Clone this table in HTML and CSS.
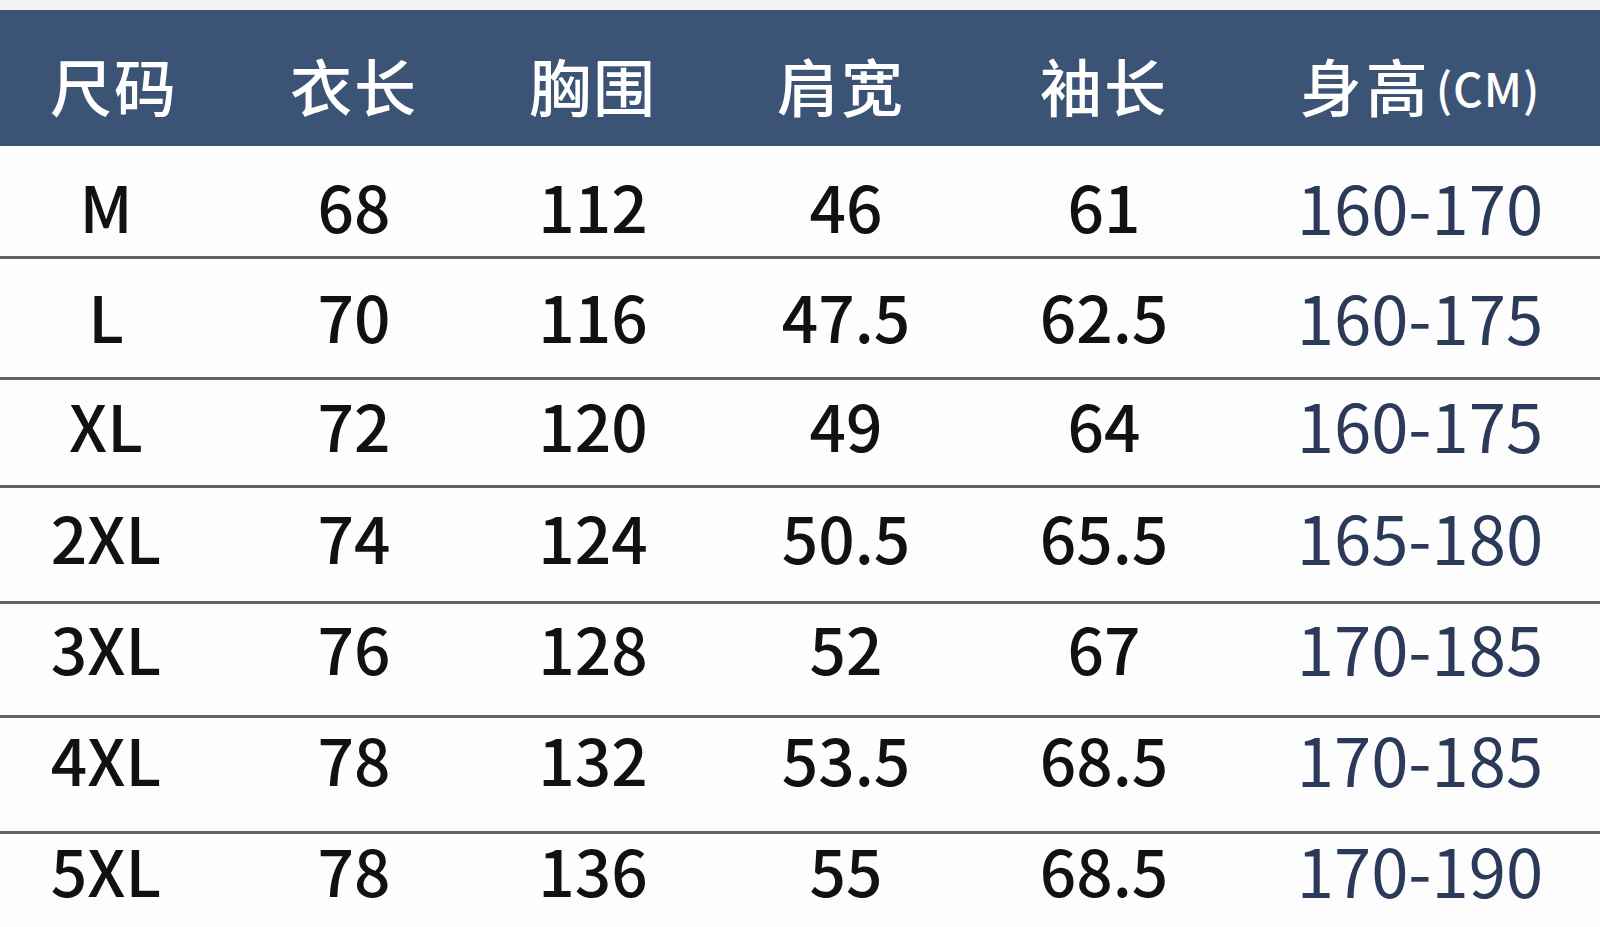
FILE: index.html
```html
<!DOCTYPE html>
<html lang="zh-CN">
<head>
<meta charset="utf-8">
<title>尺码表</title>
<link rel="stylesheet" href="styles.css">
</head>
<body>
<div class="page">
  <div class="topgap"></div>
  <div class="row head">
    <div class="cell c1">尺码</div>
    <div class="cell">衣长</div>
    <div class="cell">胸围</div>
    <div class="cell c4">肩宽</div>
    <div class="cell">袖长</div>
    <div class="cell c6">身高<span class="unit">(CM)</span></div>
  </div>
  <div class="row r1">
    <div class="cell">M</div><div class="cell">68</div><div class="cell">112</div><div class="cell">46</div><div class="cell">61</div><div class="cell c6 h">160-170</div>
  </div>
  <div class="row r2">
    <div class="cell">L</div><div class="cell">70</div><div class="cell">116</div><div class="cell">47.5</div><div class="cell">62.5</div><div class="cell c6 h">160-175</div>
  </div>
  <div class="row r3">
    <div class="cell">XL</div><div class="cell">72</div><div class="cell">120</div><div class="cell">49</div><div class="cell">64</div><div class="cell c6 h">160-175</div>
  </div>
  <div class="row r4">
    <div class="cell">2XL</div><div class="cell">74</div><div class="cell">124</div><div class="cell">50.5</div><div class="cell">65.5</div><div class="cell c6 h">165-180</div>
  </div>
  <div class="row r5">
    <div class="cell">3XL</div><div class="cell">76</div><div class="cell">128</div><div class="cell">52</div><div class="cell">67</div><div class="cell c6 h">170-185</div>
  </div>
  <div class="row r6">
    <div class="cell">4XL</div><div class="cell">78</div><div class="cell">132</div><div class="cell">53.5</div><div class="cell">68.5</div><div class="cell c6 h">170-185</div>
  </div>
  <div class="row r7">
    <div class="cell">5XL</div><div class="cell">78</div><div class="cell">136</div><div class="cell">55</div><div class="cell">68.5</div><div class="cell c6 h">170-190</div>
  </div>
</div>
</body>
</html>
```

FILE: styles.css
```css
html, body {
  margin: 0;
  padding: 0;
  background: #ffffff;
}

.page {
  width: 1600px;
  height: 927px;
  overflow: hidden;
  font-family: "Noto Sans CJK SC", "Noto Sans", sans-serif;
}

.topgap {
  height: 10px;
  background: #f3f4f5;
}

.row {
  display: grid;
  grid-template-columns: 212px 284px 194px 312px 204px 394px;
  align-items: center;
  box-sizing: border-box;
}

.cell {
  text-align: center;
  white-space: nowrap;
  line-height: 1;
}

.head {
  height: 136px;
  background: #3b5374;
  color: #ffffff;
  font-size: 62px;
  font-weight: 500;
  padding-top: 14px;
  letter-spacing: 2px;
}

.head .c1 {
  padding-left: 16px;
}

.head .c4 {
  padding-right: 10px;
}

.head .c6 {
  padding-left: 50px;
  letter-spacing: 4px;
}

.unit {
  font-size: 46px;
  letter-spacing: 1px;
  margin-left: 4px;
  vertical-align: 5px;
}

.row:not(.head) {
  font-size: 64px;
  font-weight: 500;
  color: #111111;
  background: #fdfdfd;
}

.r2, .r3, .r4, .r5, .r6, .r7 {
  border-top: 3px solid #5f6266;
}

.r1 { height: 110px; padding-top: 8px; }
.r2 { height: 121px; padding-bottom: 6px; }
.r3 { height: 108px; padding-bottom: 18px; }
.r4 { height: 116px; padding-bottom: 18px; }
.r5 { height: 114px; padding-bottom: 26px; }
.r6 { height: 116px; padding-bottom: 34px; }
.r7 { height: 96px; padding-bottom: 24px; }

.row .c6 {
  padding-left: 34px;
}

.h {
  font-size: 67px;
  font-weight: 400;
  color: #2a3a58;
}
```
